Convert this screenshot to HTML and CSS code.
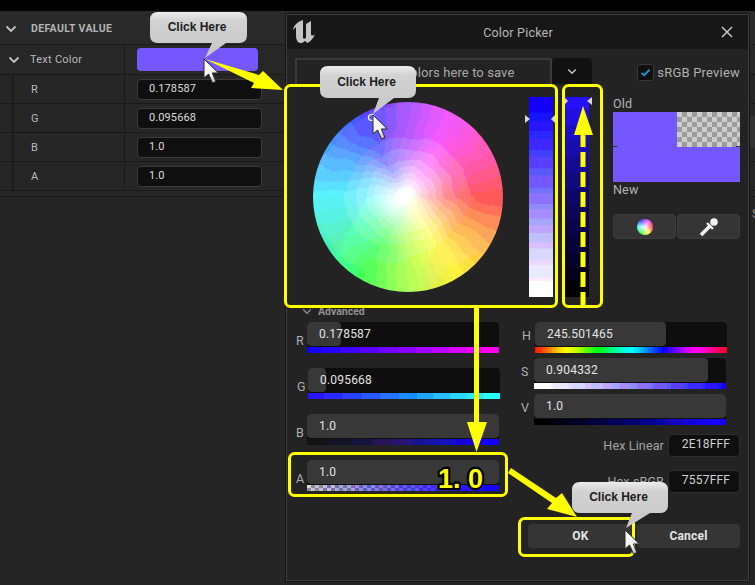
FILE: index.html
```html
<!DOCTYPE html>
<html lang="en">
<head>
<meta charset="utf-8">
<title>Color Picker</title>
<link rel="stylesheet" href="styles.css">
</head>
<body>
<div class="stage">
  <div class="topbar"></div>

  <section class="details">
    <div class="row head">
      <div class="name"><svg class="chev" viewBox="0 0 12 8"><path d="M1.5 1.5 6 6l4.5-4.5"/></svg><span class="head-title">DEFAULT VALUE</span></div>
    </div>
    <div class="row parent">
      <div class="name"><svg class="chev" viewBox="0 0 12 8"><path d="M1.5 1.5 6 6l4.5-4.5"/></svg><span>Text Color</span></div>
      <div class="value"><div class="swatch"></div></div>
    </div>
    <div class="row child">
      <div class="name"><span>R</span></div>
      <div class="value"><div class="field">0.178587</div></div>
    </div>
    <div class="row child">
      <div class="name"><span>G</span></div>
      <div class="value"><div class="field">0.095668</div></div>
    </div>
    <div class="row child">
      <div class="name"><span>B</span></div>
      <div class="value"><div class="field">1.0</div></div>
    </div>
    <div class="row child">
      <div class="name"><span>A</span></div>
      <div class="value"><div class="field">1.0</div></div>
    </div>
    <div class="details-end"></div>
  </section>

  <div class="behind-strip"></div>
  <div class="behind-letter">S</div>

  <section class="dialog">
    <header class="titlebar">
      <svg class="ue-logo" viewBox="292 20 24 25"><path d="M293 30C294 25 297 22 303 20L303 37C303 39 304 39 306 38L306 24 311 21 311 34C311 36 313 36 315 34 313 39 310 42 307 43 306 42 306 41 305 41 303 43 300 44 298 42 296 40 296 37 296 33L296 27C295 28 294 29 293 30Z"/></svg>
      <div class="title">Color Picker</div>
      <svg class="close" viewBox="0 0 12 12"><path d="M1 1l10 10M11 1 1 11"/></svg>
    </header>

    <div class="body">
      <div class="top">
        <div class="top-left">
          <div class="palette-row">
            <div class="palette">Drag colors here to save</div>
            <div class="palette-menu"><svg class="chev small" viewBox="0 0 12 8"><path d="M1.5 1.5 6 6l4.5-4.5"/></svg></div>
          </div>
          <div class="pickers">
            <div class="wheel"><div class="wheel-colors"></div></div>
            <div class="vbar sat"></div>
            <div class="vbar val"></div>
          </div>
        </div>
        <div class="top-right">
          <div class="srgb">
            <div class="check"><svg viewBox="0 0 12 10"><path d="M1.5 5.5 4.5 8 10.5 2"/></svg></div>
            <span>sRGB Preview</span>
          </div>
          <div class="prev-label old">Old</div>
          <div class="preview">
            <div class="preview-old"><div class="solid"></div><div class="checker"></div></div>
            <div class="preview-new"></div>
            <i class="tick left"></i><i class="tick right"></i>
          </div>
          <div class="prev-label new">New</div>
          <div class="tools">
            <div class="tool"><div class="mini-wheel"></div></div>
            <div class="tool">
              <svg class="dropper" viewBox="0 0 20 20"><path class="tube" d="M2 18 11 9"/><path class="collar" d="M8 6l6 6"/><circle cx="15" cy="5" r="3.8"/></svg>
            </div>
          </div>
        </div>
      </div>

      <div class="advanced-head"><svg class="chev adv" viewBox="0 0 12 8"><path d="M1.5 1.5 6 6l4.5-4.5"/></svg><span>Advanced</span></div>

      <div class="advanced">
        <div class="col-left">
          <div class="channel">
            <label>R</label>
            <div class="slider"><div class="fill" style="width:17.86%"></div><span>0.178587</span><div class="bar bar-r"></div></div>
          </div>
          <div class="channel shift">
            <label>G</label>
            <div class="slider"><div class="fill" style="width:9.57%"></div><span>0.095668</span><div class="bar bar-g"></div></div>
          </div>
          <div class="channel">
            <label>B</label>
            <div class="slider"><div class="fill" style="width:100%"></div><span>1.0</span><div class="bar bar-b"></div></div>
          </div>
          <div class="channel">
            <label>A</label>
            <div class="slider"><div class="fill" style="width:100%"></div><span>1.0</span><div class="bar bar-a"></div></div>
          </div>
        </div>
        <div class="col-right">
          <div class="hsv">
            <div class="channel">
              <label>H</label>
              <div class="slider"><div class="fill" style="width:68.2%"></div><span>245.501465</span><div class="bar bar-h"></div></div>
            </div>
            <div class="channel back">
              <label>S</label>
              <div class="slider"><div class="fill" style="width:90.43%"></div><span>0.904332</span><div class="bar bar-s"></div></div>
            </div>
            <div class="channel back">
              <label>V</label>
              <div class="slider"><div class="fill" style="width:100%"></div><span>1.0</span><div class="bar bar-v"></div></div>
            </div>
          </div>
          <div class="hex-list">
            <div class="hex"><label>Hex Linear</label><div class="hex-field">2E18FFF</div></div>
            <div class="hex"><label>Hex sRGB</label><div class="hex-field">7557FFF</div></div>
          </div>
        </div>
      </div>

      <div class="footer">
        <div class="btn ok">OK</div>
        <div class="btn cancel">Cancel</div>
      </div>
    </div>
  </section>

  <svg class="overlay" viewBox="0 0 755 585">
    <defs>
      <linearGradient id="bubble" x1="0" y1="0" x2="0" y2="1">
        <stop offset="0" stop-color="#ececec"/>
        <stop offset=".2" stop-color="#d2d2d2"/>
        <stop offset="1" stop-color="#c6c6c6"/>
      </linearGradient>
      <linearGradient id="cursor" x1="0" y1="0" x2="1" y2="1">
        <stop offset="0" stop-color="#ffffff"/>
        <stop offset=".6" stop-color="#f0f0f0"/>
        <stop offset="1" stop-color="#8a8a8a"/>
      </linearGradient>
      <g id="arrow-cursor">
        <path d="M0 0V19L4.6 15 8.5 24 12 22.500 8.300 14H14.500Z"/>
      </g>
    </defs>

    <!-- markers -->
    <circle class="ring" cx="371.500" cy="117.500" r="3"/>
    <path class="marker" d="M525 115v8l5-4zM551 119l4-4v8zM565 98v6l3-3zM587 101l5-4v8z"/>

    <!-- yellow frames -->
    <rect class="frame" x="285.500" y="85.500" width="271" height="221" rx="5"/>
    <rect class="frame" x="563.500" y="85.500" width="38" height="221" rx="5"/>
    <rect class="frame" x="289.500" y="453.500" width="217" height="42" rx="5"/>
    <rect class="frame" x="519.500" y="518.500" width="114" height="37" rx="5"/>

    <!-- arrows -->
    <path class="arrow" d="M205 59 259 75 263 71 283 90 251 88 254 83Z"/>
    <path class="arrow" d="M474 306h5V422h8L476.500 452 467 422h7Z"/>
    <path class="arrow" d="M511 468 556 498 562 493 577 517 547 509 552 503 508 473Z"/>
    <path class="arrow" d="M583 106 593 135H585.500V147H580.500V135H574Z"/>
    <line class="dash" x1="583" y1="307" x2="583" y2="152"/>
    <text class="big" x="438" y="488">1. 0</text>

    <!-- callouts -->
    <path class="bubble" d="M158 12H239Q247 12 247 20V35Q247 43 239 43H226L205 58 212 43H158Q150 43 150 35V20Q150 12 158 12Z"/>
    <text class="bubble-text" x="197" y="31">Click Here</text>
    <path class="bubble" d="M328 66H408Q416 66 416 74V90Q416 98 408 98H394L373 114 379 98H328Q320 98 320 90V74Q320 66 328 66Z"/>
    <text class="bubble-text" x="366.500" y="86">Click Here</text>
    <path class="bubble" d="M580 482H660Q668 482 668 490V505Q668 513 660 513H650L626 528 632 513H580Q572 513 572 505V490Q572 482 580 482Z"/>
    <text class="bubble-text" x="618.500" y="501">Click Here</text>

    <use class="pointer" href="#arrow-cursor" x="204" y="59"/>
    <use class="pointer" href="#arrow-cursor" x="373" y="115"/>
    <use class="pointer" href="#arrow-cursor" x="625" y="530"/>
  </svg>

  <svg class="filters" width="0" height="0">
    <filter id="posterize" x="0" y="0" width="100%" height="100%" color-interpolation-filters="sRGB">
      <feTurbulence type="fractalNoise" baseFrequency="0.05" numOctaves="1" seed="7" result="n"/>
      <feDisplacementMap in="SourceGraphic" in2="n" scale="12" xChannelSelector="R" yChannelSelector="G" result="d"/>
      <feComponentTransfer>
        <feFuncR type="discrete" tableValues="0.15 0.25 0.35 0.45 0.55 0.65 0.73 0.81 0.89 0.95 1"/>
        <feFuncG type="discrete" tableValues="0.15 0.25 0.35 0.45 0.55 0.65 0.73 0.81 0.89 0.95 1"/>
        <feFuncB type="discrete" tableValues="0.15 0.25 0.35 0.45 0.55 0.65 0.73 0.81 0.89 0.95 1"/>
      </feComponentTransfer>
    </filter>
    <filter id="bands" x="0" y="0" width="100%" height="100%" color-interpolation-filters="sRGB">
      <feComponentTransfer>
        <feFuncR type="discrete" tableValues="0 0.08 0.16 0.25 0.35 0.45 0.55 0.65 0.75 0.85 0.92 1"/>
        <feFuncG type="discrete" tableValues="0 0.08 0.16 0.25 0.35 0.45 0.55 0.65 0.75 0.85 0.92 1"/>
        <feFuncB type="discrete" tableValues="0 0.08 0.16 0.25 0.35 0.45 0.55 0.65 0.75 0.85 0.92 1"/>
      </feComponentTransfer>
    </filter>
  </svg>
</div>
</body>
</html>
```

FILE: styles.css
```css
* { box-sizing: border-box; }
html, body { margin: 0; padding: 0; }
body { background: #000; font-family: Roboto, "Liberation Sans", sans-serif; }

.stage { position: relative; width: 755px; height: 585px; overflow: hidden; background: #252525; }
.topbar { height: 11px; background: #000; }

/* details panel */
.details { background: #262626; color: #b8b8b8; font-size: 11px; }
.row { display: grid; grid-template-columns: 125px 1fr; border-bottom: 1px solid #1a1a1a; }
.row .name { display: flex; align-items: center; border-right: 1px solid #1a1a1a; }
.row .value { display: flex; align-items: center; padding-left: 12px; }
.chev { width: 12px; height: 8px; fill: none; stroke: #c4c4c4; stroke-width: 1.8; }
.head { height: 34px; background: #2a2a2a; grid-template-columns: 1fr; }
.head .name { border: 0; padding: 2px 0 0 5px; }
.head-title { margin-left: 14px; font-weight: 700; font-size: 10.5px; letter-spacing: .35px; color: #b4b4b4; }
.parent { height: 30px; background: #272727; }
.parent .name { padding-left: 8px; }
.parent .name span { margin-left: 10px; letter-spacing: .25px; }
.swatch { width: 121px; height: 23px; background: #7557ff; border-radius: 4px; }
.child { height: 29px; }
.child .name { margin-left: 13px; padding-left: 17px; border-left: 1px solid #1a1a1a; box-shadow: -2px 0 2px -1px #1c1c1c; }
.field { width: 125px; height: 21px; background: #0f0f0f; border: 1px solid #3b3b3b; border-radius: 4px; padding-left: 11px; line-height: 18px; color: #dcdcdc; letter-spacing: .1px; }
.details-end { height: 6px; border-bottom: 1px solid #1a1a1a; }

.behind-strip { position: absolute; left: 749px; top: 116px; width: 6px; height: 32px; background: #333; }
.behind-letter { position: absolute; left: 752px; top: 207px; color: #8a8a8a; font-size: 12px; }

/* dialog window */
.dialog { position: absolute; left: 286px; top: 14px; width: 463px; height: 567px; background: #232323; border: 1px solid #3e3e3e; box-shadow: 0 0 0 1px #141414; color: #bdbdbd; font-size: 12px; }
.titlebar { position: relative; height: 34px; background: #171717; display: flex; align-items: center; justify-content: center; }
.ue-logo { position: absolute; left: 5px; top: 5px; width: 24px; height: 25px; fill: #c4c4c4; }
.title { font-size: 12.5px; color: #b8b8b8; letter-spacing: .2px; margin-left: 1px; }
.close { position: absolute; right: 15px; top: 11px; width: 12px; height: 12px; fill: none; stroke: #c8c8c8; stroke-width: 1.5; }
.body { padding: 9px 8px 0; }

.top { display: flex; justify-content: space-between; }
.top-left { width: 297px; }
.top-right { width: 127px; }
.palette-row { display: flex; height: 26px; }
.palette { width: 257px; padding-left: 40px; border: 2px solid #3b3b3b; border-bottom: 0; text-align: center; line-height: 26px; font-size: 13px; color: #a8a8a8; letter-spacing: .1px; white-space: nowrap; }
.palette-menu { width: 40px; background: #111; border-radius: 4px 4px 0 0; display: flex; align-items: center; justify-content: center; margin-left: 0; }
.chev.small { width: 10px; height: 7px; }

.pickers { display: flex; align-items: flex-start; margin-top: 13px; height: 200px; }
.wheel { width: 190px; height: 190px; margin: 5px 0 0 18px; border-radius: 50%; overflow: hidden; position: relative; }
.wheel-colors { position: absolute; inset: -10px; filter: url(#posterize); background:
  radial-gradient(circle 95px at 48% 50%, #fff 0, #fff 6%, rgba(255,255,255,.78) 12%, rgba(255,255,255,.54) 25%, rgba(255,255,255,.32) 40%, rgba(255,255,255,.12) 60%, rgba(255,255,255,.03) 80%, rgba(255,255,255,0) 100%),
  conic-gradient(from 90deg, #ee3636, #eae42a 60deg, #2aee38 120deg, #2edcec 180deg, #2c2cff 240deg, #e634e8 300deg, #ee3636); }
.vbar { width: 24px; height: 200px; }
.sat { margin-left: 26px; filter: url(#bands); background: linear-gradient(#1a0fff 0, #1a0fff 5%, #7f70ff 48%, #c9c0ff 76%, #fff 100%); }
.val { margin-left: 12px; background: linear-gradient(#2410ff 0 6%, #1f0fe0 0 14%, #1b0dc6 0 22%, #170cac 0 30%, #140a94 0 38%, #11097e 0 46%, #0e076a 0 54%, #0b0658 0 62%, #090448 0 70%, #07033a 0 78%, #05022c 0 85%, #03011c 0 92%, #000 0); }

.srgb { display: flex; justify-content: flex-end; align-items: center; margin-top: 6px; height: 17px; font-size: 13px; color: #b0b0b0; letter-spacing: .2px; }
.srgb span { margin-left: 3px; white-space: nowrap; }
.check { width: 17px; height: 17px; background: #101010; border: 1px solid #3a3a3a; border-radius: 3px; display: flex; align-items: center; justify-content: center; }
.check svg { width: 11px; height: 9px; fill: none; stroke: #1f93cf; stroke-width: 2.2; }
.prev-label { height: 14px; line-height: 14px; color: #b4b4b4; font-size: 12.5px; letter-spacing: .2px; }
.prev-label.old { margin-top: 16px; }
.prev-label.new { margin-top: 1px; }
.preview { position: relative; height: 70px; margin-top: 1px; }
.preview-old { display: flex; height: 35px; }
.solid { flex: 1; background: #7557ff; }
.checker { flex: 1; background: repeating-conic-gradient(#9b9b9b 0 25%, #cdcdcd 0 50%) 0 0 / 10px 10px; }
.preview-new { height: 35px; background: #7557ff; }
.tick { position: absolute; top: 34px; width: 4px; height: 1px; background: #333; }
.tick.left { left: 0; }
.tick.right { right: 0; }
.tools { display: flex; gap: 1px; margin-top: 17px; }
.tool { flex: 1; height: 25px; background: #353535; border: 1px solid #3c3c3c; border-radius: 4px; display: flex; align-items: center; justify-content: center; }
.mini-wheel { width: 16px; height: 16px; border-radius: 50%; background: radial-gradient(circle closest-side, #fff 0, rgba(255,255,255,.15) 90%), conic-gradient(from 90deg, #ff3030, #ffff30, #30ff30, #30ffff, #3030ff, #ff30ff, #ff3030); }
.dropper { width: 20px; height: 20px; fill: #f2f2f2; }
.dropper path { fill: none; stroke: #f2f2f2; }
.dropper .tube { stroke-width: 3.6; }
.dropper .collar { stroke-width: 2.4; }

.advanced-head { display: flex; align-items: center; margin: 8px 0 0 7px; height: 12px; font-size: 10.5px; font-weight: 700; color: #8f8f8f; }
.chev.adv { width: 10px; height: 7px; stroke: #8a8a8a; margin-right: 6px; }

.advanced { display: flex; justify-content: space-between; margin: 5px 0 0 1px; }
.col-left { display: flex; flex-direction: column; gap: 15px; }
.col-right { width: 218px; }
.channel { display: flex; height: 31px; }
.channel.shift { margin-left: 1px; }
.channel.back { margin-left: -1px; }
.channel label { width: 11px; padding-top: 11px; font-size: 12.5px; color: #aeaeae; }
.col-right .channel label { width: 13px; padding-top: 6px; }
.slider { position: relative; width: 192px; height: 31px; background: #0e0e0e; border-radius: 4px 4px 0 0; color: #e4e4e4; font-size: 12px; letter-spacing: .2px; overflow: hidden; }
.slider span { position: absolute; left: 12px; top: 5px; line-height: 14px; }
.fill { position: absolute; left: 0; top: 0; height: 24px; background: #383838; border-radius: 4px; }
.bar { position: absolute; left: 0; right: 0; bottom: 0; height: 6px; filter: url(#bands); }
.bar-r { background: linear-gradient(90deg, #1a10ff, #9012f4 55%, #ff10e8); }
.bar-g { background: linear-gradient(90deg, #2e18ff, #2a90ff 55%, #2effff); }
.bar-b { background: linear-gradient(90deg, #181818, #2e1e5e 40%, #2010ff); }
.bar-a { background: linear-gradient(90deg, rgba(32,16,255,0), #2010ff 95%), repeating-conic-gradient(#8a8a8a 0 25%, #c4c4c4 0 50%) 0 0 / 8px 6px; }
.bar-h { background: linear-gradient(90deg, #ff2000, #ffff00 16.7%, #00ff20 33%, #00ffff 50%, #1010ff 66.7%, #ff10ff 83%, #ff1030); }
.bar-s { background: linear-gradient(90deg, #fff, #8070ff 60%, #2010ff); }
.bar-v { background: linear-gradient(90deg, #000, #100a70 50%, #2010ff); }

.hsv { display: flex; flex-direction: column; gap: 5px; }
.hex-list { display: flex; flex-direction: column; gap: 13px; margin-top: 9px; }
.hex { display: flex; justify-content: flex-end; align-items: center; height: 23px; }
.hex label { font-size: 12.5px; color: #a4a4a4; letter-spacing: .15px; margin-right: 4px; }
.hex-field { width: 72px; height: 23px; background: #0f0f0f; border: 1px solid #2e2e2e; border-radius: 4px; padding-left: 4px; text-align: center; line-height: 19px; font-size: 12px; color: #cfcfcf; letter-spacing: .2px; }

.footer { display: flex; justify-content: flex-end; gap: 4px; margin-top: 31px; }
.btn { height: 24px; background: #353535; border-radius: 4px; text-align: center; line-height: 24px; font-weight: 700; font-size: 12px; color: #e6e6e6; letter-spacing: .2px; }
.ok { width: 105px; }
.cancel { width: 103px; }

/* annotations */
.overlay { position: absolute; left: 0; top: 0; width: 755px; height: 585px; pointer-events: none; }
.filters { position: absolute; width: 0; height: 0; }
.frame { fill: none; stroke: #ffff00; stroke-width: 3; }
.arrow { fill: #ffff00; }
.dash { stroke: #ffff00; stroke-width: 5; stroke-dasharray: 15 5; }
.ring { fill: none; stroke: #fff; stroke-width: 1.2; }
.marker { fill: #d8d8d8; }
.big { font-family: "Liberation Sans", Arial, sans-serif; font-weight: 700; font-size: 27px; fill: #ffff00; stroke: #000; stroke-width: 4.5px; paint-order: stroke; stroke-linejoin: round; }
.bubble { fill: url(#bubble); }
.bubble-text { font-family: "Liberation Sans", Arial, sans-serif; font-weight: 700; font-size: 12px; fill: #202020; text-anchor: middle; }
.pointer { fill: url(#cursor); stroke: #2a2a2a; stroke-width: 1; }
```
